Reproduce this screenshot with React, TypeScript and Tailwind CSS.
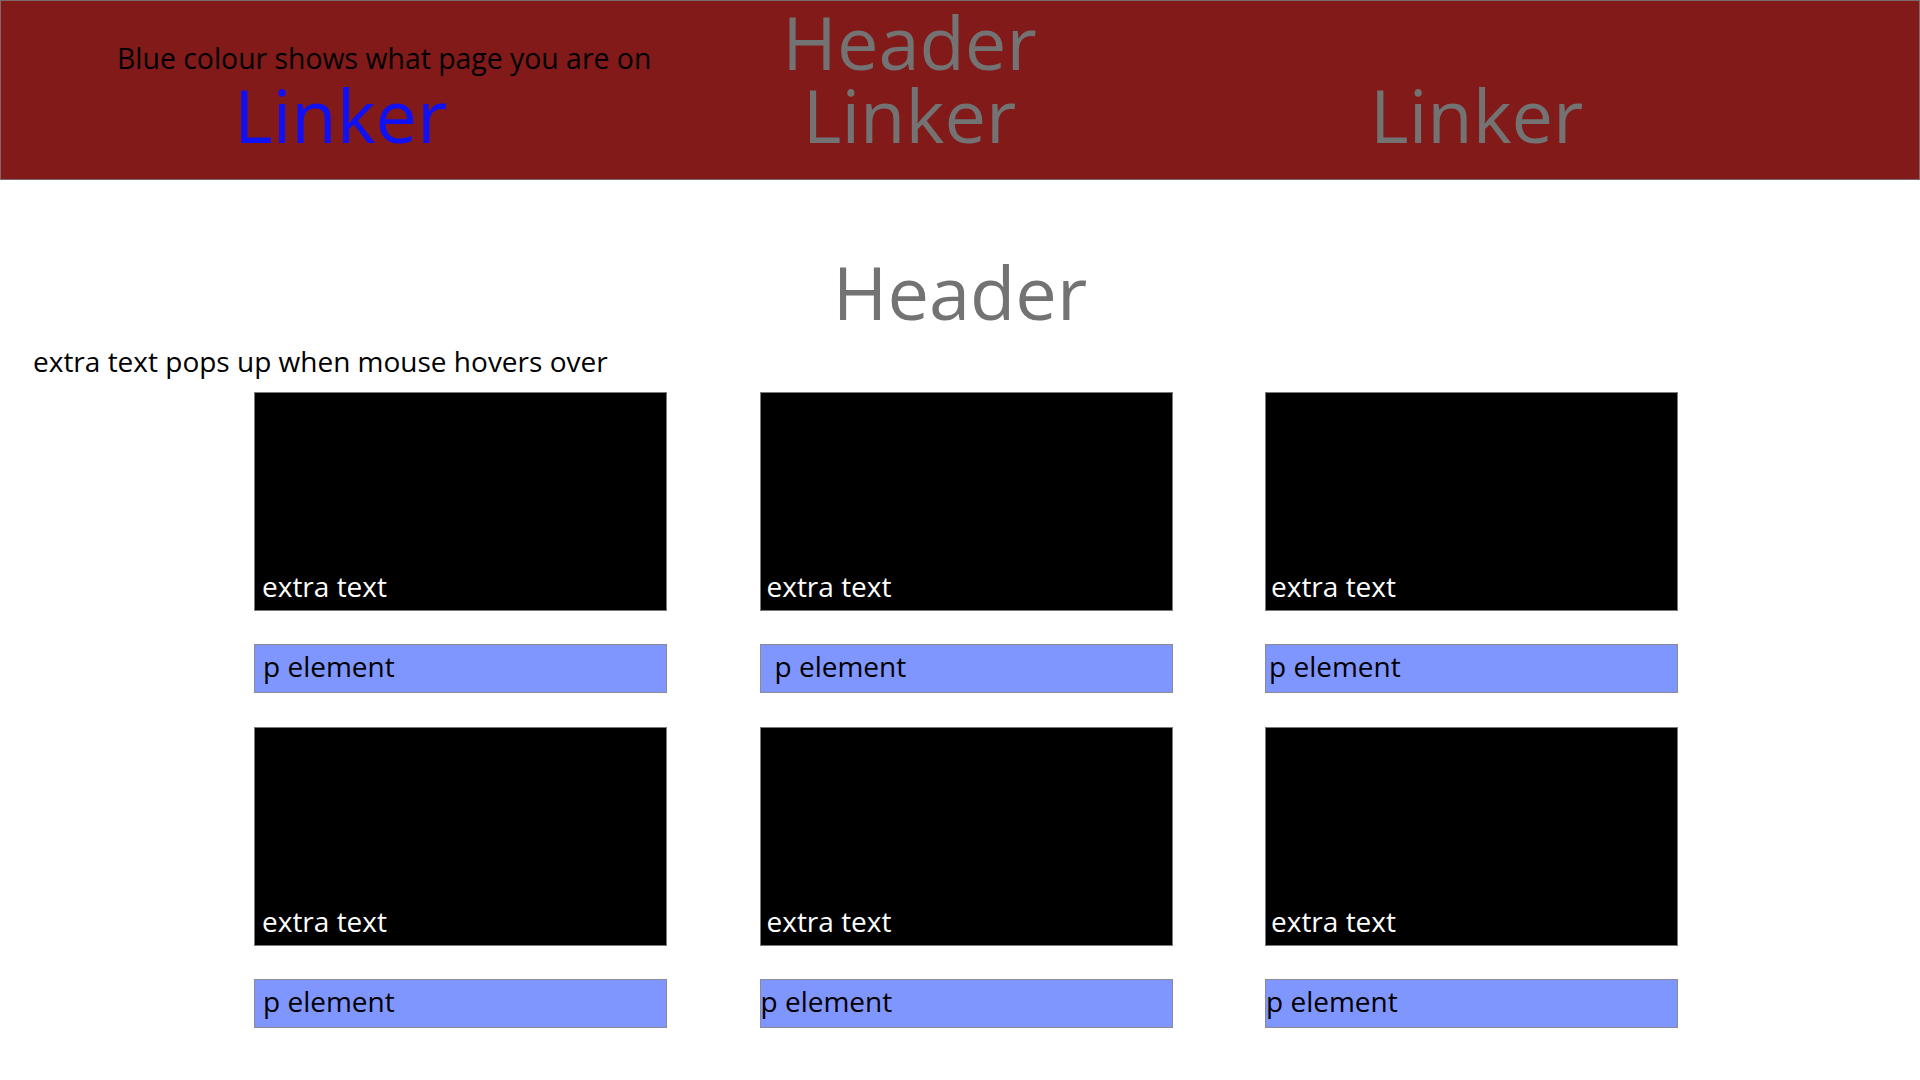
const cards = [
  { extraPad: "pl-[7px]", pPad: "pl-[8px]" },
  { extraPad: "pl-[6px]", pPad: "pl-[14px]" },
  { extraPad: "pl-[5px]", pPad: "pl-[3px]" },
  { extraPad: "pl-[7px]", pPad: "pl-[8px]" },
  { extraPad: "pl-[6px]", pPad: "pl-0" },
  { extraPad: "pl-[5px]", pPad: "pl-0" },
];

export default function App() {
  return (
    <div className="min-h-screen bg-white font-['Open_Sans',sans-serif]">
      {/* Top bar */}
      <header className="flex h-[180px] items-end border border-[#7d6a6a] bg-[#821a1a] pb-[27px]">
        <div className="ml-[116px] flex w-[535px] flex-col">
          <p className="mb-[2px] whitespace-nowrap text-[28.4px] leading-[36px] text-black">
            Blue colour shows what page you are on
          </p>
          <a className="ml-[117px] text-[74px] leading-none text-[#1010f5]">Linker</a>
        </div>
        <div className="ml-[131px] flex w-[253px] flex-col items-center">
          <h1 className="whitespace-nowrap text-[74px] leading-[72px] text-[#737373]">Header</h1>
          <a className="text-[74px] leading-none text-[#737373]">Linker</a>
        </div>
        <div className="ml-[334px] flex flex-col">
          <a className="text-[74px] leading-none text-[#737373]">Linker</a>
        </div>
      </header>

      {/* Page header */}
      <h2 className="mt-[75px] text-center text-[74px] leading-none text-[#737373]">Header</h2>
      <p className="mt-[14px] pl-[33px] text-[28px] leading-[36px] text-black">
        extra text pops up when mouse hovers over
      </p>

      {/* Cards */}
      <div className="ml-[254px] mt-[13px] grid w-fit grid-cols-[413px_413px_413px] gap-x-[92.5px] gap-y-[34px]">
        {cards.map((card, i) => (
          <div key={i} className="flex flex-col gap-[33px]">
            <div className={`flex h-[219px] items-end border border-[#7a7a7a] bg-black pb-[6px] ${card.extraPad}`}>
              <span className="text-[28px] leading-[36px] text-white">extra text</span>
            </div>
            <p className={`h-[49px] border border-[#8a8a9a] bg-[#7f96ff] pt-[3px] text-[28px] leading-[36px] text-black ${card.pPad}`}>
              p element
            </p>
          </div>
        ))}
      </div>
    </div>
  );
}
